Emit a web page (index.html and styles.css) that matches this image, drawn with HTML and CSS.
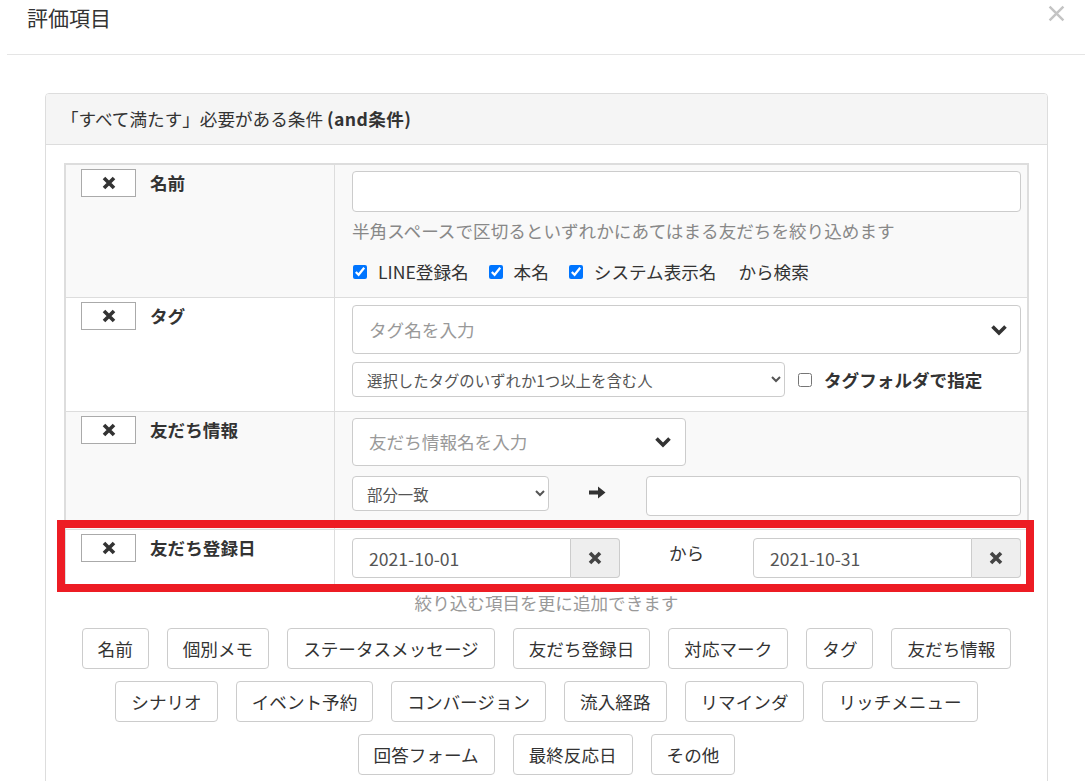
FILE: index.html
```html
<!DOCTYPE html>
<html lang="ja">
<head>
    <meta charset="UTF-8">
    <meta name="viewport" content="width=device-width, initial-scale=1.0">
    <title>評価項目</title>
    <link rel="stylesheet" href="styles.css">
</head>
<body>
    <div class="modal">
        <div class="modal-header">
            <h4 class="modal-title">評価項目</h4>
            <button class="close" type="button">
                <svg viewBox="0 0 16 16"><path d="M1.5 1.5L14.5 14.5M14.5 1.5L1.5 14.5"/></svg>
            </button>
        </div>
        <div class="modal-body">
            <div class="panel">
                <div class="panel-heading">「すべて満たす」必要がある条件 <b>(and条件)</b></div>
                <div class="panel-body">
                    <div class="cond-table">
                        <!-- 名前 -->
                        <div class="cond-row striped">
                            <div class="cond-label">
                                <button class="btn-remove" type="button"><svg class="i-times" viewBox="0 0 14 14"><path d="M2 2L12 12M12 2L2 12"/></svg></button>
                                <span>名前</span>
                            </div>
                            <div class="cond-field">
                                <input class="form-control name-input" type="text">
                                <p class="help">半角スペースで区切るといずれかにあてはまる友だちを絞り込めます</p>
                                <div class="check-line">
                                    <label class="check"><input type="checkbox" checked>LINE登録名</label>
                                    <label class="check"><input type="checkbox" checked>本名</label>
                                    <label class="check"><input type="checkbox" checked>システム表示名</label>
                                    <span class="suffix">から検索</span>
                                </div>
                            </div>
                        </div>
                        <!-- タグ -->
                        <div class="cond-row">
                            <div class="cond-label">
                                <button class="btn-remove" type="button"><svg class="i-times" viewBox="0 0 14 14"><path d="M2 2L12 12M12 2L2 12"/></svg></button>
                                <span>タグ</span>
                            </div>
                            <div class="cond-field">
                                <div class="picker tag-picker">
                                    <span class="placeholder">タグ名を入力</span>
                                    <svg class="i-chevron" viewBox="0 0 18 12"><path d="M2.5 2.5L9 9L15.5 2.5"/></svg>
                                </div>
                                <div class="tag-options">
                                    <select class="form-select tag-mode">
                                        <option>選択したタグのいずれか1つ以上を含む人</option>
                                    </select>
                                    <label class="check strong"><input type="checkbox">タグフォルダで指定</label>
                                </div>
                            </div>
                        </div>
                        <!-- 友だち情報 -->
                        <div class="cond-row striped">
                            <div class="cond-label">
                                <button class="btn-remove" type="button"><svg class="i-times" viewBox="0 0 14 14"><path d="M2 2L12 12M12 2L2 12"/></svg></button>
                                <span>友だち情報</span>
                            </div>
                            <div class="cond-field">
                                <div class="picker info-picker">
                                    <span class="placeholder">友だち情報名を入力</span>
                                    <svg class="i-chevron" viewBox="0 0 18 12"><path d="M2.5 2.5L9 9L15.5 2.5"/></svg>
                                </div>
                                <div class="info-match">
                                    <select class="form-select">
                                        <option>部分一致</option>
                                    </select>
                                    <div class="arrow-cell">
                                        <svg class="i-arrow" viewBox="0 0 17 13"><path d="M0 4.5H9V0.5L16.5 6.5L9 12.5V8.5H0Z"/></svg>
                                    </div>
                                    <input class="form-control info-value" type="text">
                                </div>
                            </div>
                        </div>
                        <!-- 友だち登録日 -->
                        <div class="cond-row marked">
                            <div class="cond-label">
                                <button class="btn-remove" type="button"><svg class="i-times" viewBox="0 0 14 14"><path d="M2 2L12 12M12 2L2 12"/></svg></button>
                                <span>友だち登録日</span>
                            </div>
                            <div class="cond-field">
                                <div class="date-range">
                                    <div class="date-group">
                                        <input class="date-input" type="text" value="2021-10-01">
                                        <span class="date-clear"><svg class="i-times" viewBox="0 0 14 14"><path d="M2 2L12 12M12 2L2 12"/></svg></span>
                                    </div>
                                    <span class="range-word">から</span>
                                    <div class="date-group">
                                        <input class="date-input" type="text" value="2021-10-31">
                                        <span class="date-clear"><svg class="i-times" viewBox="0 0 14 14"><path d="M2 2L12 12M12 2L2 12"/></svg></span>
                                    </div>
                                </div>
                            </div>
                            <div class="highlight"></div>
                        </div>
                    </div>

                    <p class="add-note">絞り込む項目を更に追加できます</p>
                    <div class="add-list">
                        <div class="add-row">
                            <button class="add-btn">名前</button>
                            <button class="add-btn">個別メモ</button>
                            <button class="add-btn">ステータスメッセージ</button>
                            <button class="add-btn">友だち登録日</button>
                            <button class="add-btn">対応マーク</button>
                            <button class="add-btn">タグ</button>
                            <button class="add-btn">友だち情報</button>
                        </div>
                        <div class="add-row">
                            <button class="add-btn">シナリオ</button>
                            <button class="add-btn">イベント予約</button>
                            <button class="add-btn">コンバージョン</button>
                            <button class="add-btn">流入経路</button>
                            <button class="add-btn">リマインダ</button>
                            <button class="add-btn">リッチメニュー</button>
                        </div>
                        <div class="add-row">
                            <button class="add-btn">回答フォーム</button>
                            <button class="add-btn">最終反応日</button>
                            <button class="add-btn">その他</button>
                        </div>
                    </div>
                </div>
            </div>
        </div>
    </div>
</body>
</html>
```

FILE: styles.css
```css
* {
    box-sizing: border-box;
}
body {
    margin: 0;
    background-color: #fff;
    color: #333;
    font-family: "Noto Sans CJK JP", "Noto Sans", sans-serif;
    font-size: 17.6px;
    line-height: 22px;
    overflow: hidden;
}
button, input, select {
    font-family: inherit;
    color: inherit;
}

/* modal */
.modal {
    margin-left: 7px;
    width: 1078px;
}
.modal-header {
    display: flex;
    justify-content: space-between;
    align-items: flex-start;
    height: 55px;
    padding: 3px 20px 0 20px;
    border-bottom: 1px solid #e5e5e5;
}
.modal-title {
    margin: 0;
    font-size: 21px;
    font-weight: normal;
    line-height: 28px;
}
.close {
    width: 17px;
    height: 17px;
    margin-top: 2px;
    padding: 0;
    border: none;
    background: none;
}
.close svg {
    display: block;
    width: 17px;
    height: 17px;
    stroke: #c4c4c4;
    stroke-width: 2.3;
    fill: none;
}
.modal-body {
    padding: 38px 37px 0 38px;
}

/* panel */
.panel {
    border: 1px solid #ddd;
    border-radius: 4px;
}
.panel-heading {
    padding: 14px 15px;
    background-color: #f5f5f5;
    border-bottom: 1px solid #ddd;
    border-radius: 3px 3px 0 0;
}
.panel-heading b {
    font-weight: bold;
    letter-spacing: 0.4px;
}
.panel-body {
    padding: 18px 18px 40px;
}

/* condition table */
.cond-table {
    border: 2px solid #ddd;
}
.cond-row {
    display: grid;
    grid-template-columns: 269px 1fr;
    background-color: #fff;
}
.cond-row + .cond-row {
    border-top: 1px solid #ddd;
}
.cond-row.striped {
    background-color: #f9f9f9;
}
.cond-row.marked {
    position: relative;
}
.cond-label {
    display: flex;
    align-items: flex-start;
    gap: 14px;
    height: 100%;
    padding: 4px 15px 0;
    font-weight: bold;
    border-right: 1px solid #ddd;
}
.cond-label span {
    line-height: 28px;
}
.btn-remove {
    display: flex;
    align-items: center;
    justify-content: center;
    width: 55px;
    height: 28px;
    padding: 0;
    background-color: #fff;
    border: 1px solid #aaa;
    flex-shrink: 0;
}
.i-times {
    width: 14px;
    height: 14px;
    stroke: #333;
    stroke-width: 3.6;
    fill: none;
}
.cond-field {
    padding: 6px 6px 14px 17px;
}
.form-control {
    display: block;
    width: 100%;
    height: 41px;
    padding: 0 14px;
    font-size: 17.6px;
    background-color: #fff;
    border: 1px solid #ccc;
    border-radius: 4px;
}
.help {
    margin: 8px 0 0;
    color: #888;
}
.check-line {
    display: flex;
    align-items: center;
    margin-top: 19px;
}
.check {
    display: inline-flex;
    align-items: center;
    gap: 11px;
    margin-right: 19px;
}
.check input {
    width: 14px;
    height: 14px;
    margin: 0 0 0 1px;
}
.check.strong {
    font-weight: bold;
    margin-left: 12px;
    gap: 12px;
}
.suffix {
    margin-left: 3px;
}

/* select2-like pickers */
.picker {
    display: flex;
    align-items: center;
    justify-content: space-between;
    background-color: #fff;
    border: 1px solid #ccc;
    border-radius: 4px;
}
.placeholder {
    color: #999;
}
.tag-picker {
    height: 49px;
    padding: 0 12px 0 16px;
    margin-top: 1px;
}
.info-picker {
    width: 334px;
    height: 48px;
    padding: 0 13px 0 16px;
}
.i-chevron {
    width: 18px;
    height: 12px;
    stroke: #333;
    stroke-width: 3.6;
    fill: none;
}
.form-select {
    height: 35px;
    padding: 0 10px;
    font-size: 15.4px;
    color: #555;
    background-color: #fff;
    border: 1px solid #ccc;
    border-radius: 4px;
}
.tag-options {
    display: flex;
    align-items: center;
    margin-top: 8px;
}
.tag-mode {
    width: 433px;
}
.info-match {
    display: grid;
    grid-template-columns: 197px 97px 1fr;
    align-items: start;
    margin-top: 10px;
}
.info-match .form-select {
    width: 197px;
}
.arrow-cell {
    display: flex;
    align-items: center;
    justify-content: center;
    height: 33px;
}
.i-arrow {
    width: 17px;
    height: 13px;
    fill: #333;
}
.info-value {
    height: 40px;
}
.cond-row:nth-child(3) .cond-field {
    padding-bottom: 13px;
}

/* date range */
.cond-row.marked .cond-field {
    padding-top: 8px;
    padding-bottom: 6px;
}
.date-range {
    display: grid;
    grid-template-columns: 268px 1fr 268px;
}
.date-group {
    display: flex;
    height: 40px;
}
.date-input {
    flex: 1;
    min-width: 0;
    padding: 0 16px;
    font-size: 17.6px;
    color: #555;
    background-color: #fff;
    border: 1px solid #ccc;
    border-radius: 4px 0 0 4px;
}
.date-clear {
    display: flex;
    align-items: center;
    justify-content: center;
    width: 49px;
    background-color: #eee;
    border: 1px solid #ccc;
    border-left: none;
    border-radius: 0 4px 4px 0;
}
.date-clear .i-times {
    stroke: #444;
}
.range-word {
    padding-top: 4px;
    text-align: center;
}
.highlight {
    position: absolute;
    top: -10px;
    left: -9px;
    right: -7px;
    bottom: -8px;
    border: 8px solid #ed1c24;
    pointer-events: none;
}

/* add buttons */
.add-note {
    margin: 6px 0 0;
    color: #999;
    text-align: center;
}
.add-list {
    margin-top: 14px;
}
.add-row {
    display: flex;
    justify-content: center;
    gap: 18px;
    margin-bottom: 12px;
}
.add-btn {
    height: 41px;
    padding: 0 15px;
    font-size: 17.6px;
    background-color: #fff;
    border: 1px solid #ccc;
    border-radius: 4px;
}
```
